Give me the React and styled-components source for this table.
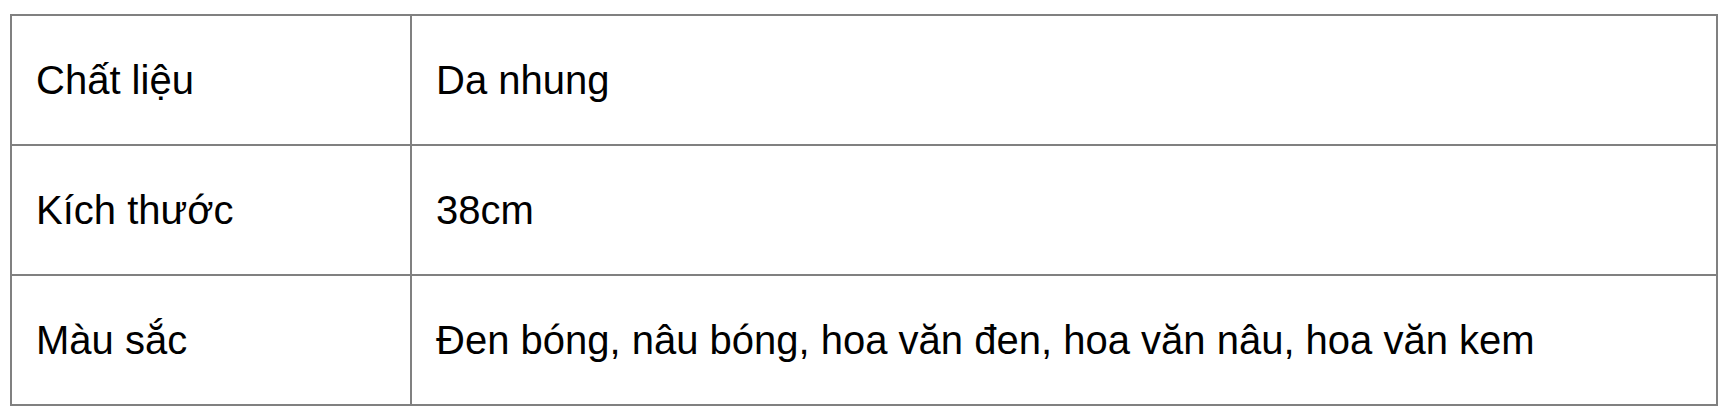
import React from "react";
import styled, { createGlobalStyle } from "styled-components";

const GlobalStyle = createGlobalStyle`
  html, body {
    margin: 0;
    padding: 0;
    background: #ffffff;
  }
  body {
    font-family: "Liberation Sans", Arial, sans-serif;
    color: #000000;
  }
`;

const Page = styled.div`
  padding: 14px 10px 10px 10px;
`;

const Table = styled.table`
  width: 100%;
  border-collapse: collapse;
  border: 2px solid #808080;
  table-layout: fixed;
`;

const Row = styled.tr`
  height: 130px;
`;

const Cell = styled.td`
  border: 2px solid #808080;
  padding: 0 24px;
  font-size: 40px;
  line-height: 1.2;
  vertical-align: middle;
  width: ${(p) => (p.$label ? "350px" : "auto")};
`;

const specs = [
  { label: "Chất liệu", value: "Da nhung" },
  { label: "Kích thước", value: "38cm" },
  {
    label: "Màu sắc",
    value: "Đen bóng, nâu bóng, hoa văn đen, hoa văn nâu, hoa văn kem",
  },
];

export default function App() {
  return (
    <>
      <GlobalStyle />
      <Page>
        <Table>
          <tbody>
            {specs.map((s) => (
              <Row key={s.label}>
                <Cell $label>{s.label}</Cell>
                <Cell>{s.value}</Cell>
              </Row>
            ))}
          </tbody>
        </Table>
      </Page>
    </>
  );
}
